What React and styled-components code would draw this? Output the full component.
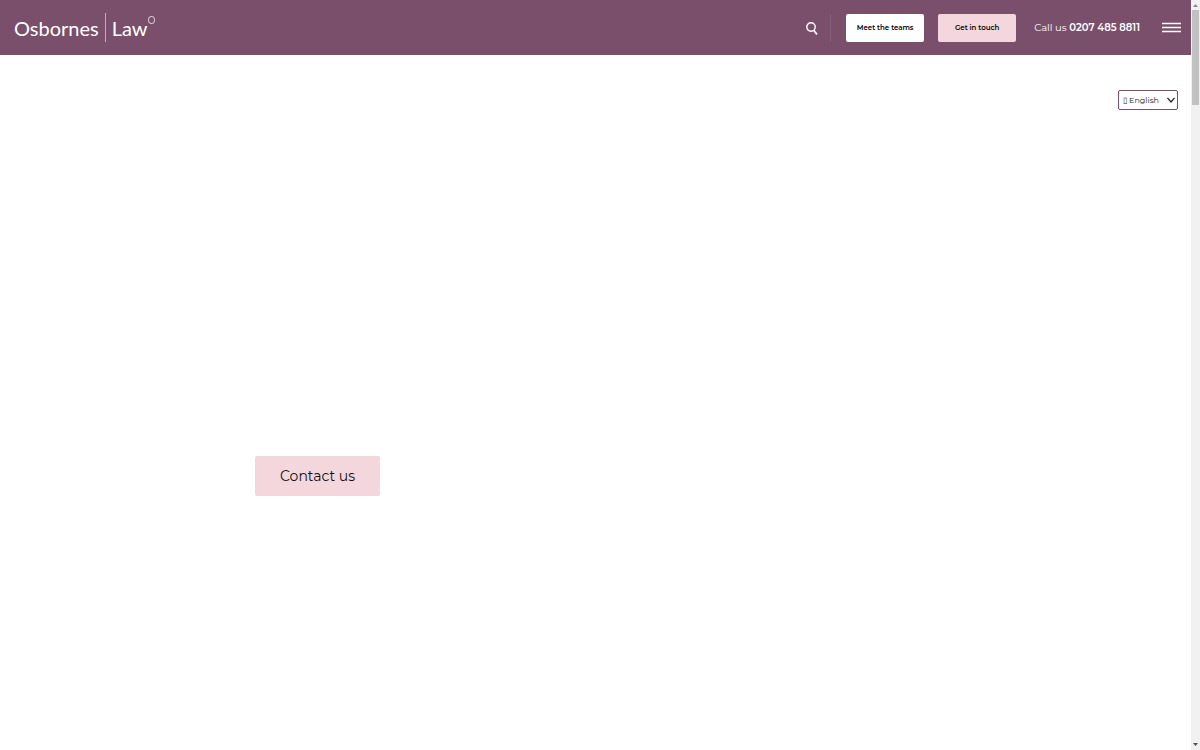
import React from "react";
import styled, { createGlobalStyle } from "styled-components";

const GlobalStyle = createGlobalStyle`
  * {
    box-sizing: border-box;
  }

  body {
    margin: 0;
    background: #fff;
    color: #000;
    font-family: Montserrat, Inter, sans-serif;
  }
`;

function Logo() {
  return (
    <LogoLink href="/" aria-label="Osbornes Law">
      <span>Osbornes</span>
      <LogoBar />
      <span>Law</span>
      <LogoRing />
    </LogoLink>
  );
}

function Header() {
  return (
    <HeaderBar>
      <Logo />
      <Tools>
        <IconButton type="button" aria-label="Search">
          <svg width="12" height="14" viewBox="0 0 12 14" fill="none" stroke="#fff">
            <circle cx="5" cy="6" r="4.2" strokeWidth="1.4" />
            <path d="M7.6 9.2 L11 13.4" strokeWidth="1.7" />
          </svg>
        </IconButton>
        <Divider />
        <HeaderButton href="/teams">Meet the teams</HeaderButton>
        <HeaderButton href="/contact" $pink>
          Get in touch
        </HeaderButton>
        <Phone href="tel:02074858811">
          Call us <strong>0207 485 8811</strong>
        </Phone>
        <IconButton type="button" aria-label="Menu">
          <svg width="19" height="12" viewBox="0 0 19 12" stroke="#fff" strokeWidth="1.3">
            <path d="M0 1.5 H19 M0 5.5 H19 M0 9.5 H19" />
          </svg>
        </IconButton>
      </Tools>
    </HeaderBar>
  );
}

function LanguagePicker() {
  return (
    <Language>
      <select aria-label="Language" defaultValue="en">
        <option value="en">▯ English</option>
      </select>
      <svg width="8" height="6" viewBox="0 0 8 6" fill="none" stroke="#222" strokeWidth="1.3">
        <path d="M0.5 0.8 L4 4.9 L7.5 0.8" />
      </svg>
    </Language>
  );
}

function ScrollTrack() {
  return (
    <Track aria-hidden="true">
      <svg width="5" height="3" viewBox="0 0 5 3">
        <path d="M0 3 L2.5 0 L5 3 Z" fill="#8a8a8a" />
      </svg>
      <Thumb />
      <svg width="5" height="3" viewBox="0 0 5 3">
        <path d="M0 0 L2.5 3 L5 0 Z" fill="#505050" />
      </svg>
    </Track>
  );
}

export default function App() {
  return (
    <>
      <GlobalStyle />
      <Page>
        <Content>
          <Header />
          <Main>
            <LanguagePicker />
            <Hero>
              <ContactLink href="/contact">Contact us</ContactLink>
            </Hero>
          </Main>
        </Content>
        <ScrollTrack />
      </Page>
    </>
  );
}

const Page = styled.div`
  display: flex;
  min-height: 100vh;
`;

const Content = styled.div`
  flex: 1;
  min-width: 0;
`;

const HeaderBar = styled.header`
  display: flex;
  align-items: center;
  justify-content: space-between;
  height: 55px;
  padding: 0 10px 0 14px;
  background: #794f6c;
`;

const LogoLink = styled.a`
  display: flex;
  align-items: center;
  color: #fff;
  font-family: Lato, sans-serif;
  font-size: 20px;
  line-height: 28px;
  text-decoration: none;
`;

const LogoBar = styled.i`
  width: 1px;
  height: 29px;
  margin: 0 6px;
  background: #c4aebd;
`;

const LogoRing = styled.i`
  align-self: flex-start;
  width: 7px;
  height: 8px;
  margin-top: 3px;
  border: 1px solid #d5c4d0;
  border-radius: 50%;
`;

const Tools = styled.div`
  display: flex;
  align-items: center;
`;

const IconButton = styled.button`
  display: flex;
  padding: 0;
  border: none;
  background: none;
  cursor: pointer;
`;

const Divider = styled.i`
  width: 1px;
  height: 28px;
  margin: 0 15px 0 12px;
  background: #865f7a;
`;

const HeaderButton = styled.a`
  width: 78px;
  margin-right: 14px;
  border-radius: 2px;
  background: ${(props) => (props.$pink ? "#f3d7dc" : "#fff")};
  color: #000;
  font-size: 7px;
  font-weight: 600;
  line-height: 28px;
  text-align: center;
  text-decoration: none;
  white-space: nowrap;
`;

const Phone = styled.a`
  margin: 0 22px 0 4px;
  color: #fff;
  font-size: 10px;
  font-weight: 400;
  text-decoration: none;
  white-space: nowrap;

  strong {
    font-weight: 600;
  }
`;

const Main = styled.main`
  padding-top: 35px;
`;

const Language = styled.div`
  display: grid;
  align-items: center;
  width: 60px;
  margin: 0 13px 0 auto;

  select,
  svg {
    grid-area: 1 / 1;
  }

  select {
    appearance: none;
    width: 100%;
    height: 20px;
    padding: 0 4px;
    border: 1px solid #794f6c;
    border-radius: 2px;
    background: #fff;
    color: #222;
    font-family: Montserrat, Inter, sans-serif;
    font-size: 8px;
  }

  svg {
    justify-self: end;
    margin-right: 3px;
    pointer-events: none;
  }
`;

const Hero = styled.section`
  max-width: 681px;
  margin: 0 auto;
  padding-top: 346px;
`;

const ContactLink = styled.a`
  display: inline-block;
  padding: 0 25px;
  border-radius: 2px;
  background: #f3d7dc;
  color: #111;
  font-size: 14px;
  line-height: 40px;
  text-decoration: none;
`;

const Track = styled.div`
  position: sticky;
  top: 0;
  display: flex;
  flex-direction: column;
  align-items: center;
  width: 9px;
  height: 100vh;
  padding: 4px 0;
  background: #f1f1f1;
`;

const Thumb = styled.div`
  width: 7px;
  height: 95px;
  margin: 3px 0 auto;
  background: #c1c1c1;
`;
